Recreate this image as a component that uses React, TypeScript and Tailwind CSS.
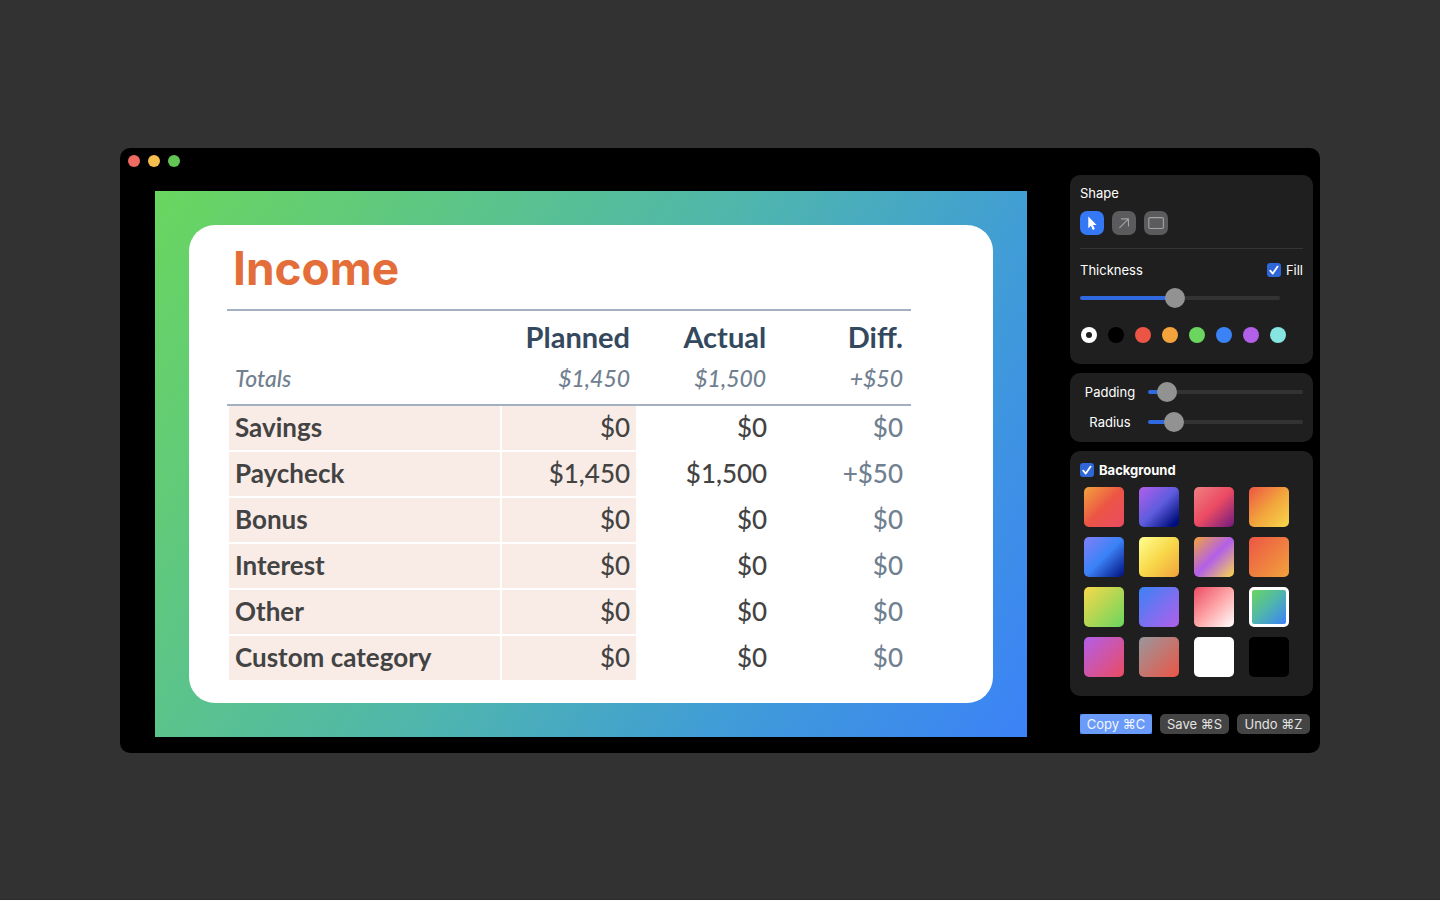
import { useState, type CSSProperties, type ReactNode } from "react";

const tools = ["Select", "Arrow", "Rectangle"] as const;

const strokeColors = [
  { name: "White", cls: "bg-white" },
  { name: "Black", cls: "bg-black" },
  { name: "Red", cls: "bg-[#ec5545]" },
  { name: "Orange", cls: "bg-[#f2a33c]" },
  { name: "Green", cls: "bg-[#6ad55f]" },
  { name: "Blue", cls: "bg-[#3b82f7]" },
  { name: "Purple", cls: "bg-[#b25fea]" },
  { name: "Mint", cls: "bg-[#86e5e1]" },
];

const backgrounds = [
  { name: "Ember", cls: "bg-[linear-gradient(135deg,#f2a33c,#ec5545_50%,#eb4b63)]" },
  { name: "Midnight", cls: "bg-[linear-gradient(135deg,#b25fea,#5e5cde_50%,#000f7d_90%)]" },
  { name: "Berry", cls: "bg-[linear-gradient(135deg,#f08080,#eb4b63_50%,#701a80)]" },
  { name: "Sunset", cls: "bg-[linear-gradient(135deg,#ec5545,#f2a33c_50%,#f8d84a)]" },
  { name: "Ocean", cls: "bg-[linear-gradient(135deg,#8080f8,#3b82f7_50%,#000f7d)]" },
  { name: "Lemon", cls: "bg-[linear-gradient(135deg,#ffff90,#f8d84a_50%,#f2a33c)]" },
  { name: "Orchid", cls: "bg-[linear-gradient(135deg,#f2a33c,#b25fea_50%,#f8d84a)]" },
  { name: "Coral", cls: "bg-[linear-gradient(135deg,#ec5545,#f2a33c)]" },
  { name: "Lime", cls: "bg-[linear-gradient(135deg,#f8d84a,#6ad55f)]" },
  { name: "Violet", cls: "bg-[linear-gradient(135deg,#3b82f7,#b25fea)]" },
  { name: "Blush", cls: "bg-[linear-gradient(135deg,#eb4b63,#fda5a8_50%,#ffffff)]" },
  { name: "Lagoon", cls: "bg-[linear-gradient(135deg,#6ad55f,#4fb5ae_50%,#3b82f7)]" },
  { name: "Magenta", cls: "bg-[linear-gradient(135deg,#b25fea,#eb4b63)]" },
  { name: "Clay", cls: "bg-[linear-gradient(135deg,#98989d,#ec5545)]" },
  { name: "White", cls: "bg-white" },
  { name: "Black", cls: "bg-black" },
];

const rows = [
  ["Savings", "$0", "$0", "$0"],
  ["Paycheck", "$1,450", "$1,500", "+$50"],
  ["Bonus", "$0", "$0", "$0"],
  ["Interest", "$0", "$0", "$0"],
  ["Other", "$0", "$0", "$0"],
  ["Custom category", "$0", "$0", "$0"],
];

function Panel({ children, className }: { children: ReactNode; className: string }) {
  return <section className={`rounded-[10px] bg-[#1f1f1f] px-2.5 ${className}`}>{children}</section>;
}

function Slider({ id, label, initial, className }: { id: string; label: string; initial: number; className: string }) {
  const [value, setValue] = useState(initial);
  return (
    <input
      id={id}
      type="range"
      aria-label={label}
      min={0}
      max={100}
      value={value}
      onChange={(e) => setValue(Number(e.target.value))}
      style={{ "--fill": `${value}%` } as CSSProperties}
      className={`block h-5 min-w-0 appearance-none bg-transparent [&::-webkit-slider-runnable-track]:h-1 [&::-webkit-slider-runnable-track]:rounded-full [&::-webkit-slider-runnable-track]:bg-[linear-gradient(to_right,#3068e0_var(--fill),#333333_var(--fill))] [&::-webkit-slider-thumb]:-mt-2 [&::-webkit-slider-thumb]:size-5 [&::-webkit-slider-thumb]:appearance-none [&::-webkit-slider-thumb]:rounded-full [&::-webkit-slider-thumb]:bg-[#929292] ${className}`}
    />
  );
}

function Check({ label, bold }: { label: string; bold?: boolean }) {
  return (
    <label className={`flex h-5 items-center gap-[5px] ${bold ? "font-bold" : ""}`}>
      <span className="grid size-3.5">
        <input
          type="checkbox"
          defaultChecked
          className="peer col-start-1 row-start-1 size-3.5 appearance-none rounded-[3px] bg-[#444] checked:bg-[#2f66d8]"
        />
        <svg
          viewBox="0 0 14 14"
          className="pointer-events-none col-start-1 row-start-1 hidden size-3.5 peer-checked:block"
          fill="none"
          stroke="#fff"
          strokeWidth="1.8"
          strokeLinecap="round"
          strokeLinejoin="round"
        >
          <path d="M3.2 7.6 5.8 10.6 10.6 3.6" />
        </svg>
      </span>
      {label}
    </label>
  );
}

function ToolIcon({ tool }: { tool: (typeof tools)[number] }) {
  if (tool === "Select")
    return (
      <svg viewBox="0 0 24 24" className="size-6" fill="#fff">
        <path d="M8.3 5.6v11.6l2.6-2.5 1.9 4.2 2.1-.9-1.9-4.1h3.6z" />
      </svg>
    );
  if (tool === "Arrow")
    return (
      <svg viewBox="0 0 24 24" className="size-6" fill="none" stroke="#a3a3a5" strokeWidth="1.1" strokeLinecap="round" strokeLinejoin="round">
        <path d="M7.7 16.6 16.5 7.9M9.5 7.9h7v7" />
      </svg>
    );
  return (
    <svg viewBox="0 0 24 24" className="size-6" fill="none" stroke="#a3a3a5" strokeWidth="1.1">
      <rect x="4.8" y="6.6" width="14.6" height="10.9" rx="1.2" />
    </svg>
  );
}

function IncomeTable() {
  return (
    <table className="w-full table-fixed border-separate border-spacing-0 border-t-2 border-[#a3b0c1] text-right text-[26px] leading-[42px] font-medium text-[#434343]">
      <colgroup>
        <col className="w-[40.2%]" />
        <col className="w-[19.9%]" />
        <col className="w-[19.9%]" />
        <col className="w-[20%]" />
      </colgroup>
      <thead>
        <tr className="text-[29px] leading-10 text-[#34495e]">
          <td className="h-[46px] p-0" />
          {["Planned", "Actual", "Diff."].map((h) => (
            <th key={h} scope="col" className="h-[46px] p-0 pt-1.5 pr-2 text-right font-bold">
              {h}
            </th>
          ))}
        </tr>
        <tr className="text-[23px] text-[#708090] italic">
          <th scope="row" className="border-b-2 border-[#a3b0c1] p-0 pb-[5px] pl-2 text-left font-medium">
            Totals
          </th>
          {["$1,450", "$1,500", "+$50"].map((v) => (
            <td key={v} className="border-b-2 border-[#a3b0c1] p-0 pr-2 pb-[5px]">
              {v}
            </td>
          ))}
        </tr>
      </thead>
      <tbody>
        {rows.map(([name, planned, actual, diff]) => (
          <tr key={name}>
            <th scope="row" className="border-x-2 border-b-2 border-white bg-[#f9ece7] p-0 pb-0.5 pl-1.5 text-left font-bold whitespace-nowrap">
              {name}
            </th>
            <td className="border-r-2 border-b-2 border-white bg-[#f9ece7] p-0 pr-1.5 pb-0.5">{planned}</td>
            <td className="border-b-2 border-white p-0 pr-[7px] pb-0.5">{actual}</td>
            <td className="border-b-2 border-white p-0 pr-2 pb-0.5 text-[#708090]">{diff}</td>
          </tr>
        ))}
      </tbody>
    </table>
  );
}

export default function App() {
  const [tool, setTool] = useState<string>("Select");
  return (
    <div className="min-h-screen border-b border-[#2f292c] bg-[#323232] px-[120px] pt-[148px] pb-[146px] font-['Inter',sans-serif] text-[13px] leading-5 text-white">
      <main className="rounded-[10px] bg-black">
        <header className="flex h-[27px] gap-2 px-2 pt-[7px]">
          <button aria-label="Close" className="size-3 rounded-full bg-[#ed6b60]" />
          <button aria-label="Minimize" className="size-3 rounded-full bg-[#f5be4f]" />
          <button aria-label="Zoom" className="size-3 rounded-full bg-[#62c655]" />
        </header>
        <div className="flex items-start gap-[43px] pr-[7px] pl-[35px]">
          <div className="mt-4 mb-4 min-w-0 flex-1 bg-[linear-gradient(122deg,#6ad65e,#4fb5ae_50%,#409bd8_75%,#3b82f7)] p-[34px] font-['Lato',sans-serif]">
            <article className="rounded-[26px] bg-white pt-[13px] pr-[82px] pb-[21px] pl-[38px]">
              <h1 className="mb-[11px] pl-1.5 font-['Inter',sans-serif] text-[46px] leading-[60px] font-bold text-[#e46e39]">Income</h1>
              <IncomeTable />
            </article>
          </div>
          <aside className="w-[243px] shrink-0 pb-[19px]">
            <Panel className="pt-2 pb-[21px]">
              <h2>Shape</h2>
              <div className="mt-2 flex gap-2">
                {tools.map((t) => (
                  <button
                    key={t}
                    aria-label={t}
                    aria-pressed={tool === t}
                    onClick={() => setTool(t)}
                    className={`size-6 rounded-[7px] ${tool === t ? "bg-[#3478f6]" : "bg-[#5b5b5d]"}`}
                  >
                    <ToolIcon tool={t} />
                  </button>
                ))}
              </div>
              <hr className="mt-[13px] border-[#353535]" />
              <div className="mt-[11px] flex justify-between">
                <label htmlFor="thickness">Thickness</label>
                <Check label="Fill" />
              </div>
              <Slider id="thickness" label="Thickness" initial={47} className="mt-2 w-[200px]" />
              <div className="mt-[19px] flex gap-[11px] pl-px">
                {strokeColors.map((c, i) => (
                  <input
                    key={c.name}
                    type="radio"
                    name="stroke"
                    aria-label={c.name}
                    defaultChecked={i === 0}
                    className={`grid size-4 appearance-none place-items-center rounded-full checked:before:size-1.5 checked:before:rounded-full checked:before:bg-[#1f1f1f] ${c.cls}`}
                  />
                ))}
              </div>
            </Panel>
            <Panel className="mt-[9px] flex flex-col gap-2.5 pt-[9px] pb-2.5">
              <div className="flex gap-2">
                <label htmlFor="padding" className="w-[60px] text-center">
                  Padding
                </label>
                <Slider id="padding" label="Padding" initial={7} className="flex-1" />
              </div>
              <div className="flex gap-2">
                <label htmlFor="radius" className="w-[60px] text-center">
                  Radius
                </label>
                <Slider id="radius" label="Radius" initial={12} className="flex-1" />
              </div>
            </Panel>
            <Panel className="mt-[9px] pt-[9px] pb-[19px]">
              <Check label="Background" bold />
              <div className="mt-[7px] grid grid-cols-[repeat(4,40px)] gap-x-[15px] gap-y-2.5 pl-1">
                {backgrounds.map((b) => (
                  <input
                    key={b.name}
                    type="radio"
                    name="background"
                    aria-label={b.name}
                    defaultChecked={b.name === "Lagoon"}
                    className={`size-10 appearance-none rounded-[5px] checked:border-3 checked:border-white ${b.cls}`}
                  />
                ))}
              </div>
            </Panel>
            <div className="mt-[18px] flex gap-2 pl-2.5 whitespace-nowrap text-[#e2e2e2]">
              <button className="h-5 w-[72px] bg-[#2f66d8]">
                <span className="block rounded-[4px] bg-[#6a9bf8] text-[#f2f6ff]">Copy ⌘C</span>
              </button>
              <button className="h-5 w-[69px] rounded-[5px] bg-[#444]">Save ⌘S</button>
              <button className="h-5 w-[73px] rounded-[5px] bg-[#444]">Undo ⌘Z</button>
            </div>
          </aside>
        </div>
      </main>
    </div>
  );
}
